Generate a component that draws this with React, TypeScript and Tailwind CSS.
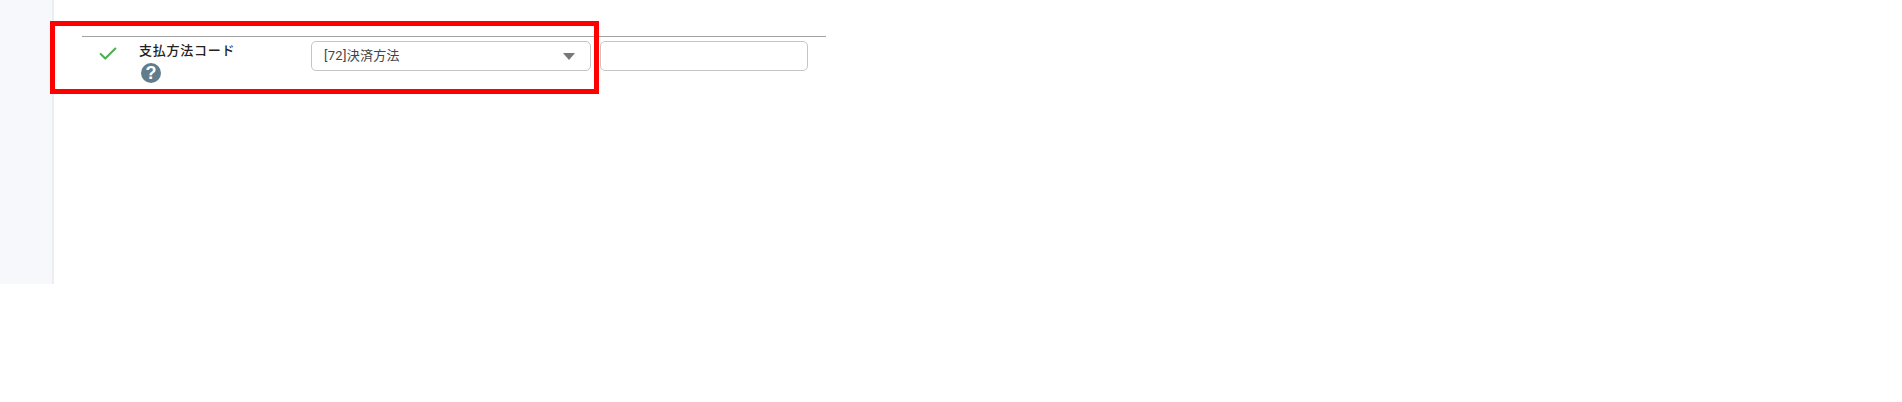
import { Check } from "lucide-react";

const fontStack = "font-['Roboto','Noto_Sans_CJK_JP',sans-serif]";

function HelpIcon() {
  return (
    <div className="w-5 h-5 rounded-full bg-[#607d8b] flex items-center justify-center text-white text-[18px] leading-none font-bold font-['Liberation_Sans',sans-serif]">
      ?
    </div>
  );
}

function Row() {
  return (
    <div className="flex border-t border-[#a3a3a3] w-[744px] h-[60px] pt-1">
      <div className="w-[56px] flex shrink-0 pl-[15px] pt-[2px]">
        <Check className="w-[22px] h-[22px] text-[#4caf50]" strokeWidth={2.25} />
      </div>
      <div className="w-[173px] shrink-0 pl-[1px]">
        <div className="text-[13px] leading-[20px] font-medium tracking-[0.75px] text-[#222222]">
          支払方法コード
        </div>
        <div className="mt-[2px] ml-[2px]">
          <HelpIcon />
        </div>
      </div>
      <div className="w-[280px] h-[30px] mr-[9px] shrink-0 border border-[#c4c4c4] rounded-[5px] flex items-center justify-between pl-[12px] pr-[15px] text-[13px] tracking-[0.3px] text-[#444444]">
        <span>[72]決済方法</span>
        <span className="w-0 h-0 border-x-[6px] border-x-transparent border-t-[7px] border-t-[#777777] mt-[1px]" />
      </div>
      <div className="w-[208px] h-[30px] shrink-0 border border-[#c4c4c4] rounded-[5px]" />
    </div>
  );
}

export default function App() {
  return (
    <div className={`relative h-[402px] w-full bg-white overflow-hidden ${fontStack}`}>
      <div className="flex h-[284px]">
        <aside className="w-[54px] shrink-0 bg-[#f7f8fc] border-r-2 border-[#ebedf2]" />
        <main className="flex-1 pl-[28px] pt-[36px]">
          <Row />
        </main>
      </div>
      {/* red highlight drawn over the row */}
      <div className="absolute left-[50px] top-[21px] w-[549px] h-[73px] border-[5px] border-[#ff0000]" />
    </div>
  );
}
